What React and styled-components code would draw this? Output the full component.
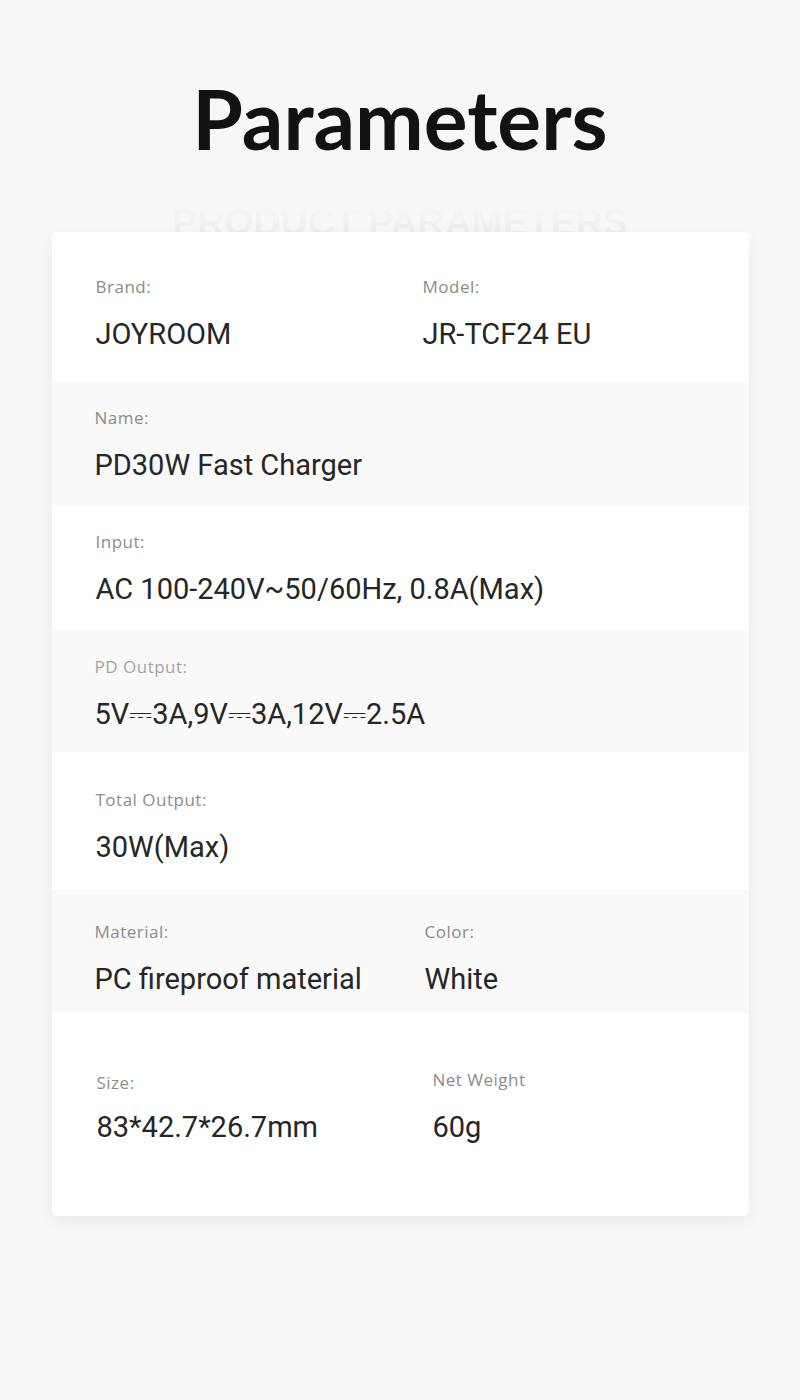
import styled, { createGlobalStyle } from "styled-components";

const Global = createGlobalStyle`
  html, body {
    margin: 0;
    padding: 0;
    background: #f7f7f7;
  }
  body {
    font-family: Roboto, "Noto Sans", sans-serif;
  }
`;

const Page = styled.div`
  width: 800px;
  height: 1400px;
  background: #f7f7f7;
  display: flex;
  flex-direction: column;
  align-items: center;
  overflow: hidden;
`;

const Title = styled.h1`
  margin: 77px 0 0;
  font-family: Lato, "Open Sans", sans-serif;
  font-weight: 700;
  font-size: 82px;
  line-height: 82px;
  color: #121212;
`;

const Ghost = styled.div`
  margin-top: 45px;
  font-family: "Liberation Sans", Arial, sans-serif;
  font-weight: 700;
  font-size: 37.5px;
  line-height: 36px;
  height: 36px;
  background: linear-gradient(180deg, #f7f7f7 0%, #ebebeb 100%);
  -webkit-background-clip: text;
  background-clip: text;
  color: transparent;
`;

const Card = styled.div`
  margin-top: -8px;
  width: 697px;
  background: #fff;
  border-radius: 6px;
  box-shadow: 0 6px 18px rgba(0, 0, 0, 0.05);
  overflow: hidden;
`;

const Row = styled.div`
  height: ${(p) => p.$h}px;
  box-sizing: border-box;
  padding: ${(p) => p.$pt}px 0 0 43px;
  background: ${(p) => (p.$shade ? "#f9f9f9" : "#ffffff")};
  display: grid;
  grid-template-columns: ${(p) => p.$split || 328}px 1fr;
`;

const Field = styled.div`
  display: flex;
  flex-direction: column;
  padding-top: ${(p) => p.$dy || 0}px;
  padding-left: ${(p) => p.$dx || 0}px;
`;

const Label = styled.div`
  font-family: "Open Sans", "Noto Sans", sans-serif;
  font-size: 17px;
  line-height: 20px;
  color: ${(p) => (p.$light ? "#a4a4a4" : "#8c8c8c")};
  letter-spacing: 0.5px;
`;

const Value = styled.div`
  margin-top: ${(p) => p.$gap || 21}px;
  font-family: Roboto, "Noto Sans", sans-serif;
  font-size: 29px;
  line-height: 32px;
  color: #262626;
  white-space: nowrap;
`;

const rows = [
  {
    h: 150,
    pt: 45,
    fields: [
      { label: "Brand:", value: "JOYROOM", dx: 1 },
      { label: "Model:", value: "JR-TCF24 EU" },
    ],
  },
  { h: 123, pt: 26, shade: true, fields: [{ label: "Name:", value: "PD30W Fast Charger" }] },
  {
    h: 125,
    pt: 27,
    fields: [{ label: "Input:", value: "AC 100-240V~50/60Hz, 0.8A(Max)", dx: 1 }],
  },
  {
    h: 122,
    pt: 27,
    shade: true,
    fields: [{ label: "PD Output:", value: "5V⎓3A,9V⎓3A,12V⎓2.5A", light: true }],
  },
  { h: 138, pt: 38, fields: [{ label: "Total Output:", value: "30W(Max)", dx: 1 }] },
  {
    h: 123,
    pt: 32,
    shade: true,
    fields: [
      { label: "Material:", value: "PC fireproof material" },
      { label: "Color:", value: "White", dx: 2 },
    ],
  },
  {
    h: 203,
    pt: 57,
    split: 338,
    fields: [
      { label: "Size:", value: "83*42.7*26.7mm", dy: 3, dx: 2, gap: 18 },
      { label: "Net Weight", value: "60g", gap: 21 },
    ],
  },
];

export default function App() {
  return (
    <Page>
      <Global />
      <Title>Parameters</Title>
      <Ghost>PRODUCT PARAMETERS</Ghost>
      <Card>
        {rows.map((row, i) => (
          <Row key={i} $h={row.h} $pt={row.pt} $shade={row.shade} $split={row.split}>
            {row.fields.map((f, j) => (
              <Field key={j} $dx={f.dx} $dy={f.dy}>
                <Label $light={f.light}>{f.label}</Label>
                <Value $gap={f.gap}>{f.value}</Value>
              </Field>
            ))}
          </Row>
        ))}
      </Card>
    </Page>
  );
}
